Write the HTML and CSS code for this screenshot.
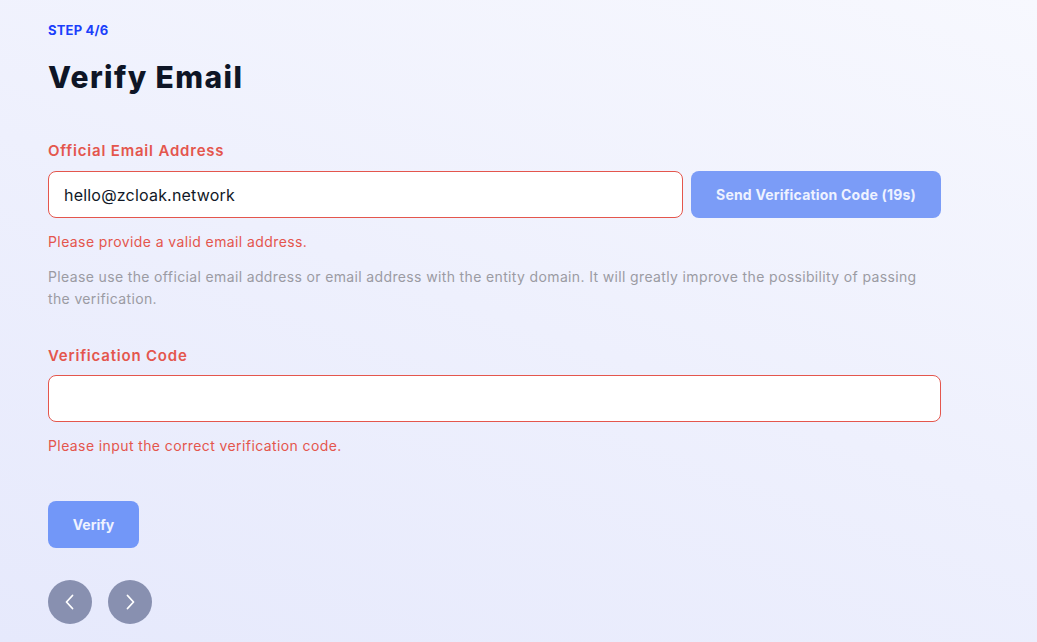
FILE: index.html
```html
<!DOCTYPE html>
<html lang="en">
<head>
<meta charset="utf-8">
<title>Verify Email</title>
<link rel="stylesheet" href="styles.css">
</head>
<body>
<main class="page">
  <div class="step">STEP 4/6</div>
  <h1 class="title">Verify Email</h1>

  <section class="field field-email">
    <label class="label">Official Email Address</label>
    <div class="row">
      <div class="input input-email">hello@zcloak.network</div>
      <button class="btn btn-send">Send Verification Code (19s)</button>
    </div>
    <p class="error">Please provide a valid email address.</p>
    <p class="hint">Please use the official email address or email address with the entity domain. It will greatly improve the possibility of passing the verification.</p>
  </section>

  <section class="field field-code">
    <label class="label">Verification Code</label>
    <div class="input input-code"></div>
    <p class="error">Please input the correct verification code.</p>
  </section>

  <button class="btn btn-verify">Verify</button>

  <nav class="pager">
    <button class="circle" aria-label="Previous">
      <svg width="14" height="18" viewBox="0 0 14 18"><path d="M9.5 2.5 L3.5 9 L9.5 15.5" fill="none" stroke="#fff" stroke-width="1.8" stroke-linecap="round" stroke-linejoin="round"/></svg>
    </button>
    <button class="circle" aria-label="Next">
      <svg width="14" height="18" viewBox="0 0 14 18"><path d="M4.5 2.5 L10.5 9 L4.5 15.5" fill="none" stroke="#fff" stroke-width="1.8" stroke-linecap="round" stroke-linejoin="round"/></svg>
    </button>
  </nav>
</main>
</body>
</html>
```

FILE: styles.css
```css
html, body {
  margin: 0;
  padding: 0;
  height: 100%;
}
body {
  font-family: "Inter", "Open Sans", sans-serif;
  background: linear-gradient(20deg, #e6e9fc 0%, #eef0fd 50%, #f7f8fe 100%);
  min-height: 642px;
}
.page {
  width: 893px;
  padding: 22px 0 0 48px;
}
.step {
  font-size: 13px;
  font-weight: 700;
  color: #1b3ffb;
  line-height: 16px;
  letter-spacing: 0.2px;
}
.title {
  margin: 20px 0 0;
  font-size: 30px;
  font-weight: 800;
  color: #0e1526;
  line-height: 38px;
  letter-spacing: 1.4px;
}
.field-email {
  margin-top: 45px;
}
.label {
  display: block;
  font-size: 15px;
  font-weight: 600;
  color: #e4564d;
  line-height: 20px;
  letter-spacing: 0.8px;
}
.row {
  display: flex;
  gap: 8px;
  margin-top: 10px;
}
.input {
  box-sizing: border-box;
  height: 47px;
  background: #fff;
  border: 1px solid #e4564d;
  border-radius: 8px;
  padding: 0 15px;
  font-size: 16px;
  color: #111827;
  display: flex;
  align-items: center;
  letter-spacing: 0.2px;
}
.input-email {
  width: 635px;
}
.input-code {
  width: 893px;
  margin-top: 9px;
}
.btn {
  border: none;
  border-radius: 8px;
  font-family: inherit;
  font-weight: 700;
  color: #eef2ff;
  font-size: 14px;
  height: 47px;
  padding: 0;
}
.btn-send {
  width: 250px;
  background: #7b9cf7;
  letter-spacing: 0.2px;
}
.error {
  margin: 14px 0 0;
  font-size: 14px;
  line-height: 20px;
  color: #e4564d;
  letter-spacing: 0.4px;
}
.hint {
  margin: 14px 0 0;
  font-size: 14px;
  line-height: 22px;
  color: #9b9ba3;
  letter-spacing: 0.36px;
  max-width: 880px;
}
.field-code {
  margin-top: 36px;
}
.btn-verify {
  display: block;
  width: 91px;
  margin-top: 45px;
  background: #7297f8;
}
.pager {
  display: flex;
  gap: 16px;
  margin-top: 32px;
}
.circle {
  width: 44px;
  height: 44px;
  border-radius: 50%;
  border: none;
  padding: 0;
  background: #8890b0;
  display: flex;
  align-items: center;
  justify-content: center;
}
```
